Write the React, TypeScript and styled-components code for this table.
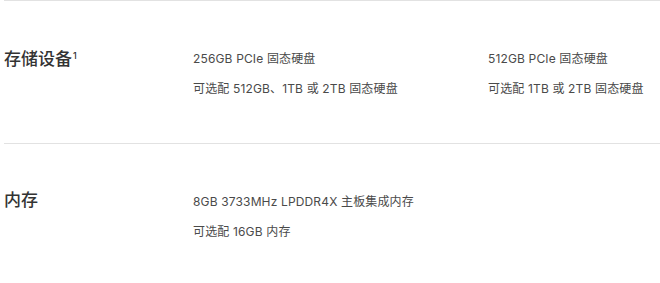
import styled, { createGlobalStyle } from "styled-components";

type specRow = {
  title: string;
  note?: string;
  columns: string[][];
};

const GlobalStyle = createGlobalStyle`
  body {
    margin: 0;
    background: #fff;
    font-family: Inter, "Noto Sans CJK SC", sans-serif;
  }
`;

const Page = styled.div`
  width: 660px;
  padding-left: 4px;
  box-sizing: border-box;
`;

const Section = styled.section`
  display: grid;
  grid-template-columns: 189px 295px 1fr;
  height: 143px;
  padding-top: 43px;
  box-sizing: border-box;
  border-top: 1px solid #e2e2e2;
`;

const Heading = styled.h3`
  margin: 0;
  font-family: "Noto Sans CJK SC", sans-serif;
  font-size: 17px;
  line-height: 24px;
  font-weight: 500;
  color: #333;
`;

const Note = styled.sup`
  font-family: Inter, sans-serif;
  font-size: 9px;
  font-weight: 500;
  vertical-align: 6px;
  margin-left: 1px;
`;

const Column = styled.div`
  display: flex;
  flex-direction: column;
`;

const Line = styled.p`
  margin: 0;
  font-size: 12px;
  line-height: 30px;
  letter-spacing: 0.15px;
  color: #4a4a4a;
  white-space: nowrap;
`;

const rows: specRow[] = [
  {
    title: "存储设备",
    note: "1",
    columns: [
      ["256GB PCIe 固态硬盘", "可选配 512GB、1TB 或 2TB 固态硬盘"],
      ["512GB PCIe 固态硬盘", "可选配 1TB 或 2TB 固态硬盘"],
    ],
  },
  {
    title: "内存",
    columns: [["8GB 3733MHz LPDDR4X 主板集成内存", "可选配 16GB 内存"]],
  },
];

const App = () => {
  return (
    <>
      <GlobalStyle />
      <Page>
        {rows.map((row) => (
          <Section key={row.title}>
            <Heading>
              {row.title}
              {row.note && <Note>{row.note}</Note>}
            </Heading>
            {row.columns.map((col, i) => (
              <Column key={i}>
                {col.map((text) => (
                  <Line key={text}>{text}</Line>
                ))}
              </Column>
            ))}
          </Section>
        ))}
      </Page>
    </>
  );
};

export default App;
